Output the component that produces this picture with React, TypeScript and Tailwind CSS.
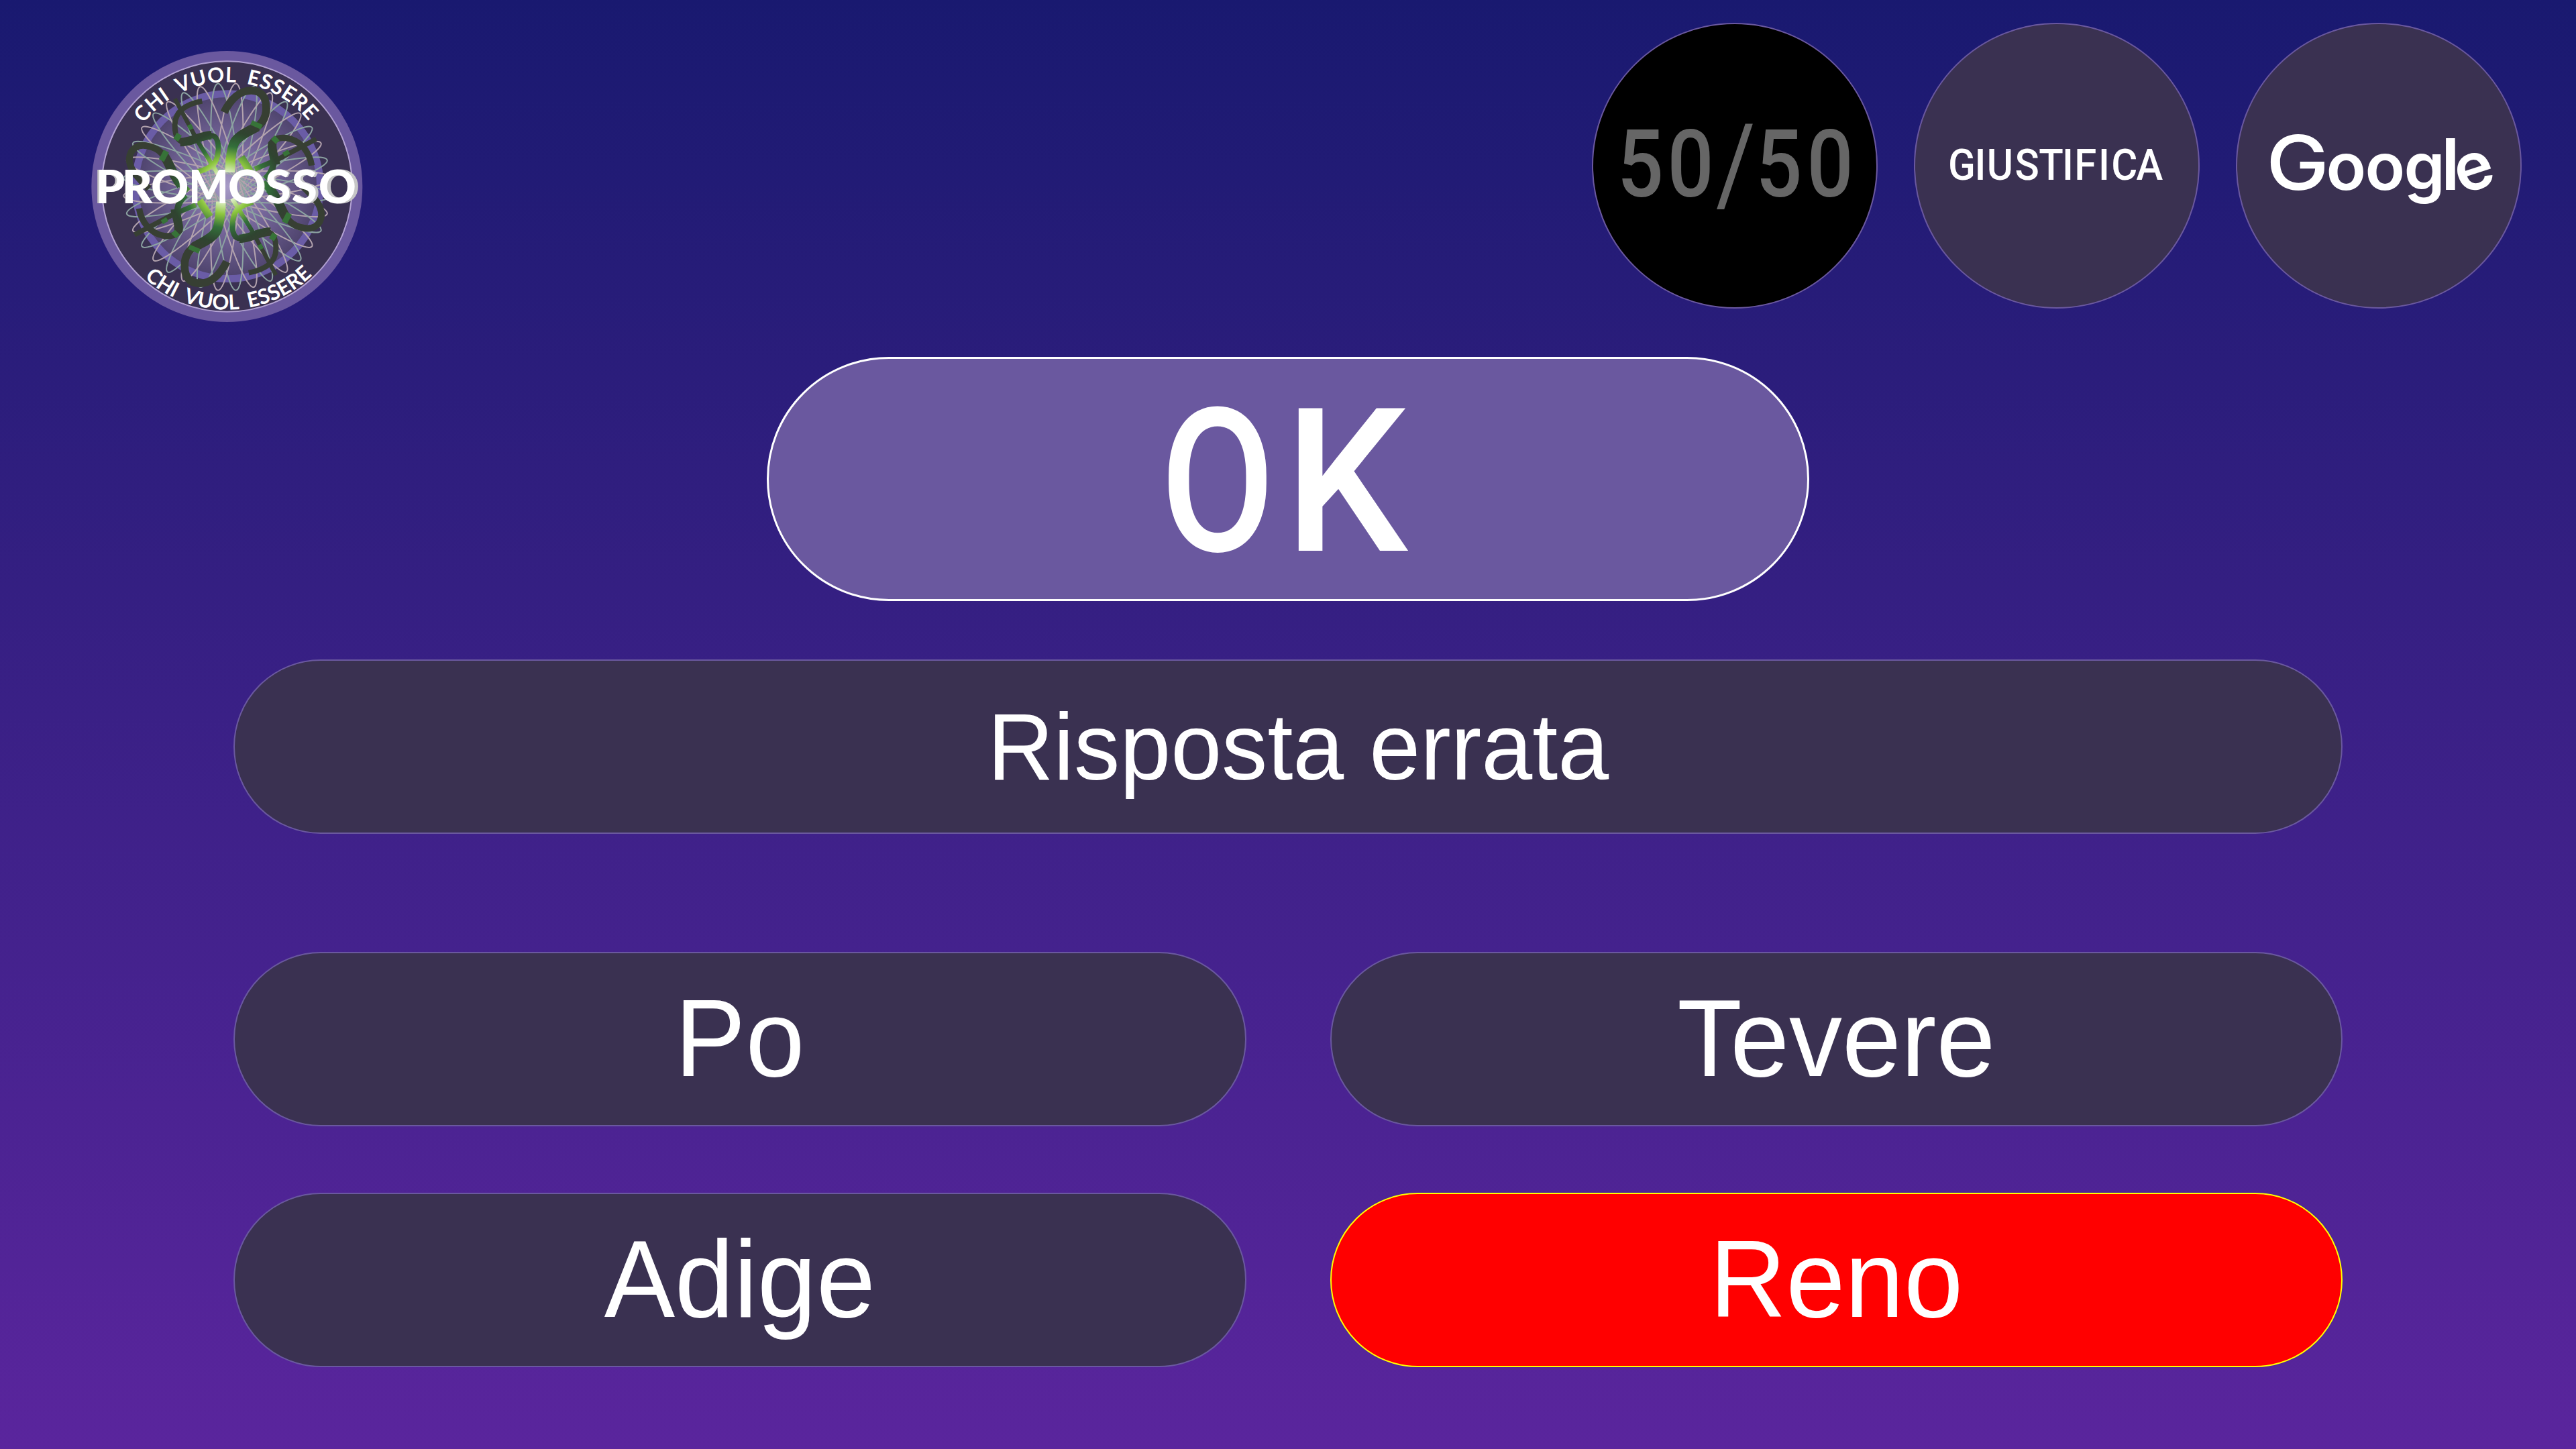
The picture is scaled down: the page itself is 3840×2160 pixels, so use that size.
import React from "react";

const ELLIPSES = Array.from({ length: 18 }, (_, k) => k);

function GreenArms() {
  return (
    <g fill="none" stroke="url(#arm)">
      <path d="M642 322 C672 262 715 224 765 225 C815 226 834 262 830 318 C824 368 792 392 744 412 C690 436 668 480 668 590" strokeWidth="35" />
      <path d="M790 386 C760 404 716 420 692 452 C678 474 670 520 668 590" strokeWidth="44" />
      <path d="M544 272 C480 284 424 312 422 376 C421 430 436 466 492 456 C536 446 572 412 602 432 C626 460 618 530 594 556 C572 574 550 582 524 588" strokeWidth="24" />
      <path d="M446 456 C500 456 530 426 586 424" strokeWidth="38" />
      <path d="M422 262 L530 462 L618 604" strokeWidth="19" />
      <path d="M1034 560 C1024 500 984 446 920 437 C878 432 846 450 852 484 C860 530 880 570 826 620" strokeWidth="28" />
      <path d="M858 456 C854 500 872 530 874 556" strokeWidth="38" />
      <path d="M1054 442 L880 534 L780 576" strokeWidth="22" />
      <path d="M718 522 L764 596" strokeWidth="34" />
      <path d="M990 648 C1030 690 1076 726 1078 780 C1074 836 1030 846 1000 840 C940 830 920 800 896 740 C870 690 850 670 816 636" strokeWidth="30" />
      <path d="M922 795 C896 760 886 710 846 664" strokeWidth="42" />
    </g>
  );
}

function GreenBands() {
  return (
    <g stroke="#377338">
      <path d="M764 368 L810 388" strokeWidth="22" />
      <path d="M486 378 L496 398" strokeWidth="20" />
      <path d="M426 446 L442 420" strokeWidth="26" />
      <path d="M860 434 L882 456" strokeWidth="24" />
      <path d="M908 512 L932 498" strokeWidth="20" />
      <path d="M912 816 L934 774" strokeWidth="26" />
    </g>
  );
}

function Logo() {
  return (
    <svg viewBox="0 0 1320 1320" className="h-[440px] w-[440px] shrink-0">
      <defs>
        <radialGradient id="disc" gradientUnits="userSpaceOnUse" cx="658" cy="653" r="398">
          <stop offset="0" stopColor="#a79bc6" />
          <stop offset="0.5" stopColor="#75669a" />
          <stop offset="1" stopColor="#50456f" />
        </radialGradient>
        <radialGradient id="arm" gradientUnits="userSpaceOnUse" cx="652" cy="654" r="300">
          <stop offset="0.2" stopColor="#e4f2cf" />
          <stop offset="0.4" stopColor="#8dc63f" />
          <stop offset="0.6" stopColor="#33703a" />
          <stop offset="0.82" stopColor="#2f4430" />
          <stop offset="1" stopColor="#373f33" />
        </radialGradient>
        <path id="arcTop" d="M188 654 A467 467 0 0 1 1122 654" />
        <path id="arcBottom" d="M104 654 A551 551 0 0 0 1206 654" />
      </defs>
      <circle cx="655" cy="654" r="606" fill="#6a589f" />
      <circle cx="655" cy="654" r="560" fill="#3a3151" stroke="#b3a2d3" strokeWidth="6" />
      <circle cx="658" cy="653" r="414" fill="url(#disc)" stroke="#6a5ca6" strokeWidth="32" />
      <g fill="none" strokeWidth="6">
        {ELLIPSES.map((k) => (
          <ellipse
            key={k}
            cx="655"
            cy="656"
            rx="60"
            ry="464"
            stroke={k % 2 ? "#b3a3ae" : "#8ca3a1"}
            transform={`rotate(${k * 10 - 5} 655 656)`}
          />
        ))}
      </g>
      <GreenArms />
      <g transform="rotate(180 648 656)">
        <GreenArms />
      </g>
      <GreenBands />
      <g transform="rotate(180 648 656)">
        <GreenBands />
      </g>
      <g fill="#fff" fontFamily="Lato, sans-serif" fontWeight="700" fontSize="93" wordSpacing="22">
        <text>
          <textPath href="#arcTop" startOffset="302" textLength="850" lengthAdjust="spacing">CHI VUOL ESSERE</textPath>
        </text>
        <text>
          <textPath href="#arcBottom" startOffset="460" textLength="828" lengthAdjust="spacing">CHI VUOL ESSERE</textPath>
        </text>
      </g>
      {/* White title with a grey extrusion that spreads outwards from its middle */}
      <g fontFamily="Lato, sans-serif" fontWeight="900" fontSize="208">
        <text y="728" fill="#c6c6c6" aria-hidden="true">
          <tspan x="60 184 314">PRO</tspan>
          <tspan x="484" textLength="178" lengthAdjust="spacingAndGlyphs">M</tspan>
          <tspan x="662 832 956 1080">OSSO</tspan>
        </text>
        <text y="728" fill="#fff">
          <tspan x="68 187 316">PRO</tspan>
          <tspan x="484" textLength="178" lengthAdjust="spacingAndGlyphs">M</tspan>
          <tspan x="660 826 944 1064">OSSO</tspan>
        </text>
      </g>
    </svg>
  );
}

function Lifeline({ used, children }: { used?: boolean; children: React.ReactNode }) {
  return (
    <button
      className={
        used
          ? "flex size-[426px] items-center justify-center rounded-full border-2 border-[#6a589f] bg-black text-[#666666]"
          : "flex size-[426px] items-center justify-center rounded-full border-2 border-[#6a589f] bg-[#3a3151] text-white"
      }
    >
      {children}
    </button>
  );
}

function Answer({ wrong, children }: { wrong?: boolean; children: React.ReactNode }) {
  return (
    <button
      className={
        wrong
          ? "flex h-[260px] items-center justify-center rounded-full border-2 border-[#ffff00] bg-[#ff0000] text-[158px] leading-none"
          : "flex h-[260px] items-center justify-center rounded-full border-2 border-[#6a589f] bg-[#3a3151] text-[158px] leading-none"
      }
    >
      <span className="origin-[50%_85%] scale-y-[1.03]">{children}</span>
    </button>
  );
}

export default function App() {
  return (
    <div className="flex h-[2160px] w-[3840px] flex-col overflow-hidden bg-linear-to-b from-[#191970] to-[#5a259d] font-['Liberation_Sans',Arial,sans-serif] text-white">
      <header className="flex h-[532px] items-start justify-between pl-[120px] pr-[81px]">
        <div className="pt-[60px]">
          <Logo />
        </div>
        <div className="flex gap-[54px] pt-[34px]">
          <Lifeline used>
            <svg viewBox="0 0 422 422" className="size-full" fill="currentColor" fontFamily="Roboto, sans-serif" fontWeight="500" fontSize="140">
              <g transform="scale(0.87 1)">
                <text y="257 257 266 257 257" x="41 127 210 278.6 366">50<tspan fontSize="165" fontWeight="400">/</tspan>50</text>
              </g>
            </svg>
          </Lifeline>
          <Lifeline>
            <svg viewBox="0 0 422 422" className="size-full" fill="currentColor" fontFamily="Roboto, sans-serif" fontWeight="500" fontSize="64.5">
              <g transform="scale(0.93 1)">
                <text y="232" x="52.7 95.3 114.9 159.8 198.2 235.4 255.1 293.5 314.3 354.2">GIUSTIFICA</text>
              </g>
            </svg>
          </Lifeline>
          <Lifeline>
            <svg viewBox="0 0 422 422" className="size-full" fill="currentColor" fontFamily="Inter, sans-serif" fontWeight="600" fontSize="98">
              <text>
                <tspan x="43" y="247" fontSize="112" fontWeight="500" textLength="94" lengthAdjust="spacingAndGlyphs">G</tspan>
                <tspan x="132.5 190.5 248.5" y="247">oog</tspan>
                <tspan x="304" y="247" fontSize="106">l</tspan>
                <tspan x="334" y="254" rotate="-18">e</tspan>
              </text>
            </svg>
          </Lifeline>
        </div>
      </header>
      <main className="flex flex-col items-center">
        <button className="flex h-[364px] w-[1554px] items-center justify-center rounded-full border-[3px] border-white bg-[#6a589f]">
          <svg viewBox="0 0 480 360" className="h-[360px] w-[480px] shrink-0" fill="currentColor" fontFamily="Roboto, sans-serif" fontWeight="500" fontSize="299">
            <text y="287">
              <tspan x="50" textLength="170" lengthAdjust="spacingAndGlyphs">O</tspan>
              <tspan x="235" textLength="183" lengthAdjust="spacingAndGlyphs">K</tspan>
            </text>
          </svg>
        </button>
        <div className="mt-[87px] flex h-[260px] w-[3144px] items-center justify-center rounded-full border-2 border-[#6a589f] bg-[#3a3151] pl-[30px] text-[136.6px] leading-none">
          <span className="origin-[50%_85%] translate-y-[2px] scale-y-[1.03]">Risposta errata</span>
        </div>
        <div className="mt-[176px] grid w-[3144px] grid-cols-2 gap-x-[125px] gap-y-[99px]">
          <Answer>Po</Answer>
          <Answer>Tevere</Answer>
          <Answer>Adige</Answer>
          <Answer wrong>Reno</Answer>
        </div>
      </main>
    </div>
  );
}
